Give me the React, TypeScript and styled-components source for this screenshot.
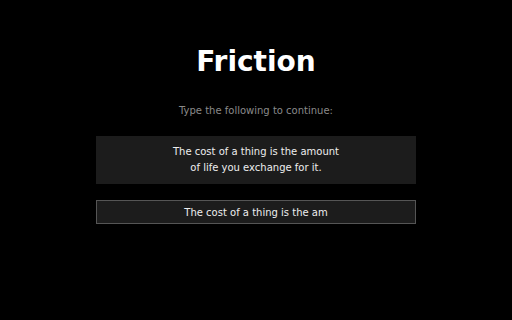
import React, { useState } from "react";
import styled, { createGlobalStyle } from "styled-components";

const Global = createGlobalStyle`
  html, body { margin: 0; padding: 0; background: #000; }
  body { font-family: "DejaVu Sans", Verdana, sans-serif; }
`;

const Page = styled.main`
  width: 512px;
  height: 320px;
  box-sizing: border-box;
  padding-top: 44px;
  display: flex;
  flex-direction: column;
  align-items: center;
  background: #000;
  color: #fff;
`;

const Title = styled.h1`
  margin: 0;
  font-size: 28px;
  line-height: 36px;
  font-weight: bold;
  color: #fff;
`;

const Prompt = styled.p`
  margin: 24px 0 0;
  font-size: 10px;
  line-height: 14px;
  color: #8a8a8a;
`;

const Quote = styled.div`
  margin-top: 18px;
  width: 320px;
  height: 48px;
  box-sizing: border-box;
  background: #1c1c1c;
  display: flex;
  align-items: center;
  justify-content: center;
`;

const QuoteText = styled.p`
  margin: 0;
  max-width: 170px;
  text-align: center;
  font-size: 10px;
  line-height: 16px;
  color: #eee;
`;

const Input = styled.input`
  margin-top: 16px;
  width: 320px;
  height: 24px;
  box-sizing: border-box;
  background: #1c1c1c;
  border: 1px solid #555;
  outline: none;
  color: #eee;
  text-align: center;
  font-family: "DejaVu Sans", Verdana, sans-serif;
  font-size: 10px;
  padding: 0 8px;
`;

export default function App() {
  const [value, setValue] = useState("The cost of a thing is the am");
  return (
    <>
      <Global />
      <Page>
        <Title>Friction</Title>
        <Prompt>Type the following to continue:</Prompt>
        <Quote>
          <QuoteText>The cost of a thing is the amount of life you exchange for it.</QuoteText>
        </Quote>
        <Input value={value} onChange={(e) => setValue(e.target.value)} />
      </Page>
    </>
  );
}
